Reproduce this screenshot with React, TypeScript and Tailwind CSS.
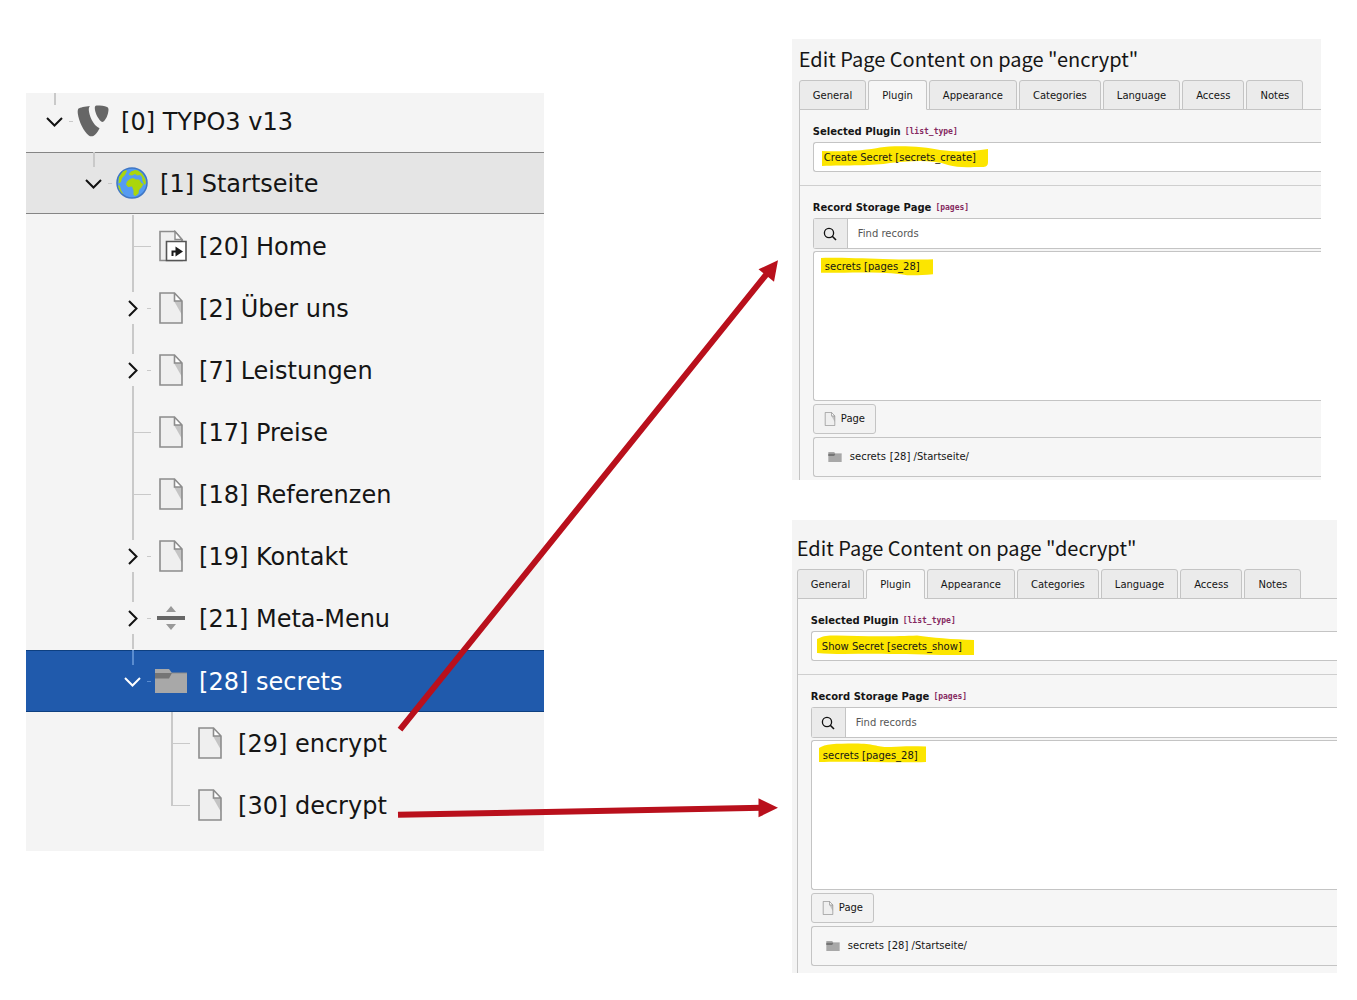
import { useId, type ReactNode } from "react";
import clsx from "clsx";

type Toggle = "open" | "closed" | "none";
type IconName = "typo3" | "globe" | "shortcut" | "page" | "divider" | "folder";

type Item = {
	id: number;
	label: string;
	level: number;
	toggle: Toggle;
	icon: IconName;
	last?: boolean;
};

const items: Item[] = [
	{ id: 0, label: "TYPO3 v13", level: 0, toggle: "open", icon: "typo3" },
	{ id: 1, label: "Startseite", level: 1, toggle: "open", icon: "globe" },
	{ id: 20, label: "Home", level: 2, toggle: "none", icon: "shortcut" },
	{ id: 2, label: "Über uns", level: 2, toggle: "closed", icon: "page" },
	{ id: 7, label: "Leistungen", level: 2, toggle: "closed", icon: "page" },
	{ id: 17, label: "Preise", level: 2, toggle: "none", icon: "page" },
	{ id: 18, label: "Referenzen", level: 2, toggle: "none", icon: "page" },
	{ id: 19, label: "Kontakt", level: 2, toggle: "closed", icon: "page" },
	{ id: 21, label: "Meta-Menu", level: 2, toggle: "closed", icon: "divider" },
	{ id: 28, label: "secrets", level: 2, toggle: "open", icon: "folder" },
	{ id: 29, label: "encrypt", level: 3, toggle: "none", icon: "page" },
	{ id: 30, label: "decrypt", level: 3, toggle: "none", icon: "page", last: true },
];

const indents = ["pl-2", "pl-[47px]", "pl-[86px]", "pl-[125px]"];

function PageIcon({ className }: { className: string }) {
	return (
		<svg viewBox="0 0 24 32" className={className}>
			<path d="M1 1h14.500l7.500 8v22H1z" fill="#efefef" />
			<path d="M15 9h8v14z" fill="#c4c4c4" />
			<path d="M15.500 1v8H23z" fill="#fff" />
			<path d="M1 1h14.500l7.500 8v22H1zM15.500 1v8H23" fill="none" stroke="#8c8c8c" strokeWidth="1.600" />
		</svg>
	);
}

function FolderIcon({ className }: { className: string }) {
	return (
		<svg viewBox="0 0 32 24" className={className}>
			<path d="M0 0h14l3 4h15v20H0z" fill="#a8a8a8" />
			<path d="M0 4h17l-3 5.500H0z" fill="#757575" />
			<path d="M17 4h15" stroke="#8b8b8b" />
		</svg>
	);
}

function TreeIcon({ name }: { name: IconName }) {
	if (name === "typo3")
		return (
			<svg viewBox="0 0 32 32" className="h-8 w-8">
				<path
					d="M13 1C8 1.500 3 2.500 1.500 3.500 .8 4.500 .5 6 .8 8.500c1 8 6 18 11 22 2 1.500 4.500 1 6.500-1 1.500-1.500 3.200-4 4.200-6.300C16 20.500 12 10 11.800 5 11.800 3 12 2 13 1z"
					fill="#666"
				/>
				<path
					d="M19.500.6c4.500 0 8 .5 10.500 1.300 1.300.6 1.600 1.700 1.500 3.200-.4 5-2.500 9.500-5 11.500-1 .6-1.700.4-2.600-.4C20.500 13 17.800 7 17.800 3c0-1.500.5-2.200 1.700-2.400z"
					fill="#666"
				/>
			</svg>
		);
	if (name === "globe")
		return (
			<svg viewBox="0 0 32 32" className="h-8 w-8">
				<circle cx="16" cy="16" r="15" fill="#559bf2" stroke="#3f76c4" strokeWidth="1.500" />
				<path d="M3 10l4-5.500L10 3l1 1-2 4-3 3-1 4-2.500 1.500z" fill="#abd60b" />
				<path d="M2 18l2 1 1 4 2.500 4.500C4.500 25.500 2.500 22 2 18z" fill="#abd60b" />
				<path d="M13 7l2-2.500 4-1.500 3 .5 4 3 2.500 4-2.500-.5-2-2-3 .5-2-1.500-3 1.500-3-.5z" fill="#abd60b" />
				<path
					d="M11 14.500l3-2.500 3-1 3 1.500 3 0 2.500 3.500 2 1-2 3.500-2.500 2.500-.5 3.500-3 2.500-2-1 0-4.500-1.500-4-4 .5-2-2.500z"
					fill="#abd60b"
				/>
				<path d="M26 9l3 2 1 5-1.500 2-2-4z" fill="#abd60b" />
			</svg>
		);
	if (name === "shortcut")
		return (
			<svg viewBox="0 0 28 32" className="ml-1 h-8 w-7">
				<path d="M1 1.500h15l7 8v21H1z" fill="#efefef" stroke="#8c8c8c" strokeWidth="1.600" />
				<path d="M16 1.500v8h7z" fill="#fff" stroke="#8c8c8c" strokeWidth="1.400" />
				<path d="M7.500 11.500h19.500v19H7.500z" fill="#fff" stroke="#555" strokeWidth="1.600" />
				<path d="M12.500 26v-5.500h4V16.500l7.500 5-7.500 5v-4h-2V26z" fill="#1a1a1a" />
			</svg>
		);
	if (name === "divider")
		return (
			<svg viewBox="0 0 28 24" className="h-6 w-7">
				<path d="M14 0l5 6H9zM14 24l5-6H9z" fill="#999" />
				<path d="M0 10h28v4H0z" fill="#666" />
			</svg>
		);
	if (name === "folder") return <FolderIcon className="h-6 w-8" />;
	return <PageIcon className="h-8 w-6" />;
}

function Connector({ item, active }: { item: Item; active: boolean }) {
	const line = active ? "#5a8ccf" : "#c9c9c9";
	const ink = active ? "#fff" : "#111";
	return (
		<svg viewBox="0 0 39 62" className="h-[62px] w-[39px] shrink-0">
			{item.toggle === "none" ? (
				<>
					<path d={item.last ? "M21 0v32" : "M21 0v62"} stroke={line} strokeWidth="2" />
					<path d="M21 31.500h18" stroke={line} />
				</>
			) : (
				<>
					<path d="M21 0v15" stroke={line} strokeWidth="2" />
					<path d="M35 31.500h4" stroke={line} />
				</>
			)}
			{item.toggle === "closed" && (
				<>
					<path d="M21 47v15" stroke={line} strokeWidth="2" />
					<path d="M17 24l7.500 7.500L17 39" fill="none" stroke={ink} strokeWidth="2" />
				</>
			)}
			{item.toggle === "open" && <path d="M13 28l7.500 7.500L28 28" fill="none" stroke={ink} strokeWidth="2" />}
		</svg>
	);
}

function PageTree() {
	return (
		<nav className="mt-[93px] ml-[26px] w-[38.2%] self-start overflow-hidden bg-[#f4f4f4] pb-[15px]">
			<ul>
				{items.map((item) => {
					const active = item.id === 28;
					return (
						<li key={item.id}>
							<a
								href="#"
								className={clsx(
									"flex items-center text-2xl",
									indents[item.level],
									item.level === 0 ? "h-[59px] pb-1" : "h-[62px]",
									item.id === 1 && "mb-px border-y border-[#858585] bg-[#e5e5e5]",
									active ? "mt-px border-y border-[#0d3f80] bg-[#205aac] text-white" : "text-[#151515]",
								)}
							>
								<Connector item={item} active={active} />
								<span className="mr-[9px] flex w-[39px] shrink-0 justify-center">
									<TreeIcon name={item.icon} />
								</span>
								<span className="pt-0.5 whitespace-nowrap">
									[{item.id}] {item.label}
								</span>
							</a>
						</li>
					);
				})}
			</ul>
		</nav>
	);
}

const tabs = ["General", "Plugin", "Appearance", "Categories", "Language", "Access", "Notes"];

function FieldLabel({ htmlFor, name, children }: { htmlFor: string; name: string; children: ReactNode }) {
	return (
		<label htmlFor={htmlFor} className="flex h-4 items-center gap-1 font-bold">
			{children}
			<code className="font-['DejaVu_Sans_Mono',monospace] text-[8px] text-[#85295f]">[{name}]</code>
		</label>
	);
}

type EditorProps = {
	page: string;
	plugin: string;
	className: string;
	formClassName: string;
	pluginMark: string;
	recordMark: string;
};

function Editor({ page, plugin, className, formClassName, pluginMark, recordMark }: EditorProps) {
	const id = useId();
	return (
		<section className={clsx("overflow-hidden bg-[#f4f4f4] text-[10px] leading-4 text-[#151515]", className)}>
			<h1 className="mb-[5px] font-['Noto_Sans_CJK_JP',sans-serif] text-xl leading-8 whitespace-nowrap">
				Edit Page Content on page "{page}"
			</h1>
			<div role="tablist" className="flex gap-0.5">
				{tabs.map((tab) => (
					<button
						key={tab}
						role="tab"
						aria-selected={tab === "Plugin"}
						className={clsx(
							"h-[30px] rounded-t-[3px] border border-[#c4c4c4] px-[13px] pt-0.5",
							tab === "Plugin" ? "relative border-b-[#f6f6f6] bg-[#f6f6f6]" : "bg-[#ebebeb]",
						)}
					>
						{tab}
					</button>
				))}
			</div>
			<div className={clsx("-mt-px border-t border-l border-[#c4c4c4] bg-[#f6f6f6]", formClassName)}>
				<div className="border-b border-[#cfcfcf] pt-3.5 pb-[13px] pl-[13px]">
					<FieldLabel htmlFor={id + "plugin"} name="list_type">
						Selected Plugin
					</FieldLabel>
					<div className="relative mt-0.5 h-[30px] rounded-l-[3px] border border-r-0 border-[#c4c4c4] bg-white">
						<svg viewBox="0 0 180 30" className="absolute top-0 left-0 h-[30px] w-[180px]">
							<path d={pluginMark} fill="#fce500" />
						</svg>
						<select id={id + "plugin"} className="relative h-full w-full appearance-none bg-transparent pt-0.5 pl-[10px]">
							<option>{plugin}</option>
						</select>
					</div>
				</div>
				<div className="pt-3.5 pl-[13px]">
					<FieldLabel htmlFor={id + "search"} name="pages">
						Record Storage Page
					</FieldLabel>
					<div className="mt-0.5 flex h-[31px] rounded-l-[3px] border border-r-0 border-[#c4c4c4] bg-white">
						<span className="flex w-[34px] items-center justify-center border-r border-[#c4c4c4] bg-[#ebebeb]">
							<svg viewBox="0 0 14 14" className="h-3.5 w-3.5">
								<circle cx="6" cy="6" r="4.600" fill="none" stroke="#111" strokeWidth="1.300" />
								<path d="M9 9l4 4" stroke="#111" strokeWidth="1.600" />
							</svg>
						</span>
						<input
							id={id + "search"}
							type="text"
							placeholder="Find records"
							className="min-w-0 flex-1 pl-[10px] placeholder:text-[#555]"
						/>
					</div>
					<div className="relative mt-0.5 h-[150px] rounded-l-[3px] border border-r-0 border-[#c4c4c4] bg-white">
						<svg viewBox="0 0 130 30" className="absolute top-0 left-0 h-[30px] w-[130px]">
							<path d={recordMark} fill="#fce500" />
						</svg>
						<select
							multiple
							aria-label="Selected records"
							className="relative h-full w-full overflow-hidden bg-transparent pt-[9px] pl-[11px]"
						>
							<option className="p-0">secrets [pages_28]</option>
						</select>
					</div>
					<button className="mt-[3px] flex h-[30px] items-center gap-[5px] rounded-[3px] border border-[#c4c4c4] bg-[#f2f2f2] px-[10px]">
						<PageIcon className="h-3.5 w-3" />
						Page
					</button>
					<div className="mt-[3px] flex h-10 items-center rounded-l-[3px] border border-r-0 border-[#c4c4c4] pl-3.5">
						<FolderIcon className="mr-2 h-2.5 w-3.5" />
						<span className="mr-1">secrets</span>
						<span>[28] /Startseite/</span>
					</div>
				</div>
			</div>
		</section>
	);
}

export default function App() {
	return (
		<main className="relative flex bg-white pb-7 font-['DejaVu_Sans',sans-serif]">
			<PageTree />
			<div className="ml-auto flex w-[41.65%] flex-col gap-10 pt-[39px]">
				<Editor
					page="encrypt"
					plugin="Create Secret [secrets_create]"
					className="mr-9 pt-1 pl-[7px]"
					formClassName="pb-[3px]"
					pluginMark="M8 8C30 9 55 7 66 4.500 80 2 110 3 126 7c15 2 30 2 48-1v13c0 4-2 5-6 5-14 0-24 1-34-2-16-6-40-4-58-2-16 3-44 2-68 3z"
					recordMark="M7 6c14-.5 40 .5 62 1 18 .5 32 1 50 .2v15c-14 1-22 2-32 0-28-3-60-1-80-1.500z"
				/>
				<Editor
					page="decrypt"
					plugin="Show Secret [secrets_show]"
					className="mr-5 pt-3 pl-[5px]"
					formClassName="pb-[7px]"
					pluginMark="M5 7c6-3 10-4 20-3.500 26 1 60 1 80 0 14 2 36 4 57 4.500v15c-32 .5-60-1-84-1-24-1-50 1-73-1z"
					recordMark="M7 7c6-4 16-4.500 36-4.500 20 0 22 4 36 3.500 12-1 22-1 35-.5v15.500c-32 1-76-1-107 0z"
				/>
			</div>
			<svg
				viewBox="0 0 1357 1000"
				preserveAspectRatio="none"
				className="pointer-events-none absolute inset-0 h-full w-full"
			>
				<path d="M400 729L768 272M398 814L762 807" stroke="#b9101c" strokeWidth="6" />
				<path d="M778 260l-4 21.500-15.500-12.500zM778 807l-19.500 9.500v-19z" fill="#b9101c" />
			</svg>
		</main>
	);
}
